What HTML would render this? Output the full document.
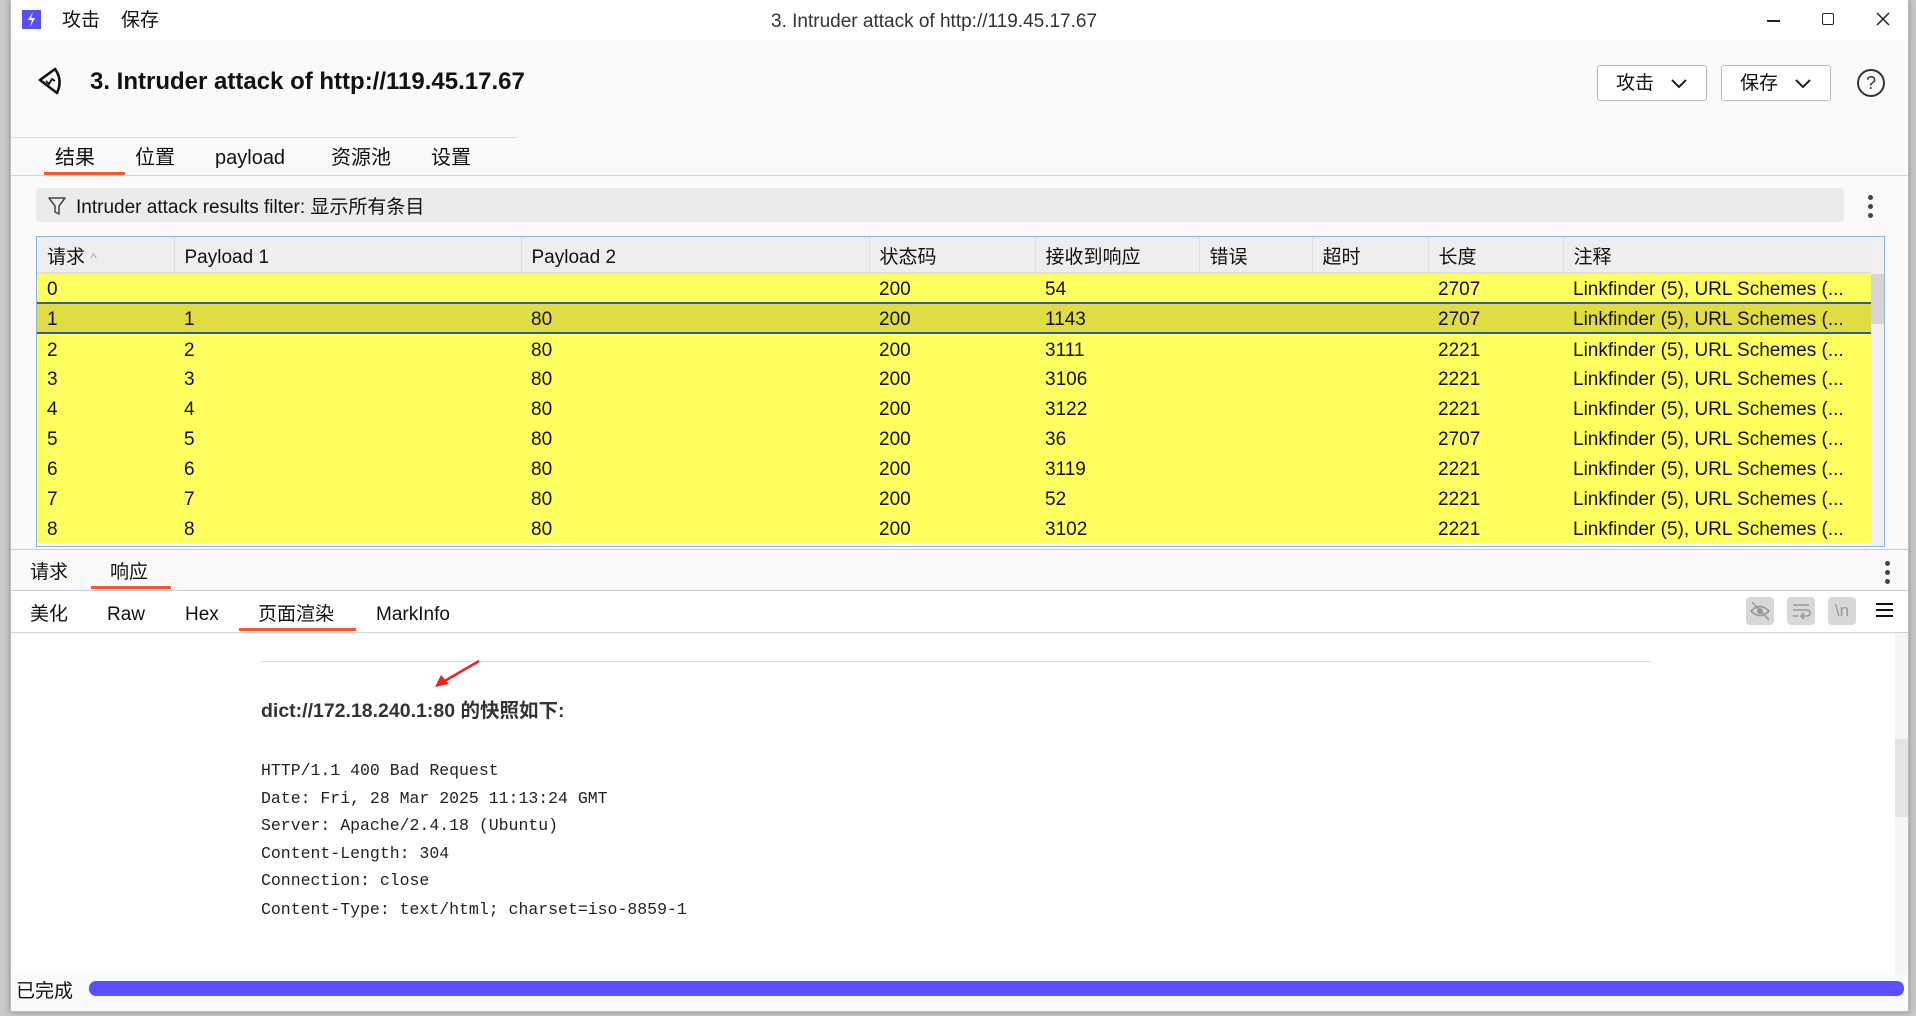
<!DOCTYPE html>
<html><head><meta charset="utf-8"><style>
*{margin:0;padding:0;box-sizing:border-box}
body{width:1916px;height:1016px;background:#c9c9c9;position:relative;overflow:hidden;font-family:"Liberation Sans","Noto Sans CJK SC",sans-serif;color:#111;line-height:1.25}
.win{position:absolute;left:10px;top:0;width:1899px;height:1012px;background:#fafafa;border:1px solid #bbb;border-top:none;box-shadow:0 0 6px rgba(0,0,0,.3)}
.a{position:absolute;white-space:nowrap}
.tb{position:absolute;left:0;top:0;width:100%;height:40px;background:#fff}
.btn{position:absolute;top:65px;height:36px;border:1px solid #b8b8b8;border-radius:3px;background:#fff;font-size:19px;line-height:36px;padding-left:18px}
table{border-collapse:collapse;table-layout:fixed}
td,th{font-weight:normal;text-align:left;padding-left:10px;font-size:19px;white-space:nowrap;overflow:hidden;line-height:24px}
th{height:36px;background:#eee;border-right:1px solid #ddd;border-bottom:2px solid #ddd;padding-top:6px}
td{height:30px;padding-top:4px}
tr.y td{background:#ffff60}
tr.s td{background:#e0dd44;border-top:2px solid #2a5f9a;border-bottom:2px solid #2a5f9a}
.mono{font-family:"Liberation Mono",monospace;font-size:16.5px;color:#222}
.ib{position:absolute;top:597px;width:28px;height:28px;border-radius:4px;background:#d8d8d8}
</style></head><body>
<div class="win">
<div class="tb">
<div class="a" style="left:11px;top:10px;width:19px;height:19px;background:#5a50f0"></div>
<svg class="a" style="left:15px;top:12px" width="11" height="15" viewBox="0 0 11 15"><path d="M7 0 L2 8 H6 L4 15 L9 6 H5 Z" fill="#fff"/></svg>
<div class="a" style="left:51px;top:9px;font-size:19px">攻击</div>
<div class="a" style="left:110px;top:9px;font-size:19px">保存</div>
<div class="a" style="left:760px;top:10px;font-size:19px;color:#333">3. Intruder attack of http://119.45.17.67</div>
<div class="a" style="left:1756px;top:20px;width:13px;height:1.5px;background:#222"></div>
<div class="a" style="left:1811px;top:13px;width:12px;height:12px;border:1.5px solid #222;border-radius:2px"></div>
<svg class="a" style="left:1865px;top:12px" width="14" height="14"><path d="M1 1L13 13M13 1L1 13" stroke="#222" stroke-width="1.5"/></svg>
</div>
<svg class="a" style="left:26px;top:66px" width="28" height="30" viewBox="0 0 28 30"><path d="M3 14 L18 3 Q26 14 20 27 Z" fill="none" stroke="#111" stroke-width="2.6" stroke-linejoin="round"/><path d="M9 15 L12 18 L15 13 L18 15" fill="none" stroke="#111" stroke-width="1.8"/></svg>
<div class="a" style="left:79px;top:67px;font-size:24px;font-weight:bold">3. Intruder attack of http://119.45.17.67</div>
<div class="btn" style="left:1586px;width:110px">攻击<svg class="a" style="left:72px;top:12px" width="18" height="12"><path d="M2 2L9 9L16 2" fill="none" stroke="#222" stroke-width="2"/></svg></div>
<div class="btn" style="left:1710px;width:110px">保存<svg class="a" style="left:72px;top:12px" width="18" height="12"><path d="M2 2L9 9L16 2" fill="none" stroke="#222" stroke-width="2"/></svg></div>
<div class="a" style="left:1846px;top:69px;width:28px;height:28px;border:2px solid #333;border-radius:50%;text-align:center;font-size:18px;line-height:24px;color:#333">?</div>
<div class="a" style="left:0;top:137px;width:506px;height:1px;background:#cfe0ee"></div>
<div class="a" style="left:0;top:175px;width:100%;height:1px;background:#d4d4d4"></div>
<div class="a" style="left:44px;top:146px;font-size:20px">结果</div>
<div class="a" style="left:124px;top:146px;font-size:20px">位置</div>
<div class="a" style="left:204px;top:146px;font-size:20px">payload</div>
<div class="a" style="left:320px;top:146px;font-size:20px">资源池</div>
<div class="a" style="left:420px;top:146px;font-size:20px">设置</div>
<div class="a" style="left:33px;top:172px;width:81px;height:3px;background:#f25a2c"></div>
<div class="a" style="left:25px;top:188px;width:1808px;height:34px;background:#ebebeb;border-radius:4px"></div>
<svg class="a" style="left:36px;top:196px" width="20" height="20"><path d="M2 2H18L12 10V18L8 16V10Z" fill="none" stroke="#444" stroke-width="1.5" stroke-linejoin="round"/></svg>
<div class="a" style="left:65px;top:196px;font-size:19px">Intruder attack results filter: 显示所有条目</div>
<div class="a" style="left:1857px;top:195px;width:5px;height:5px;border-radius:50%;background:#444;box-shadow:0 9px 0 #444,0 18px 0 #444"></div>
<div class="a" style="left:25px;top:236px;width:1849px;height:311px;border:1px solid #8ab4e0;background:#fff;overflow:hidden">
<table style="width:1834px">
<colgroup><col style="width:137px"><col style="width:347px"><col style="width:348px"><col style="width:166px"><col style="width:164px"><col style="width:113px"><col style="width:116px"><col style="width:135px"><col style="width:308px"></colgroup>
<tr><th>请求 <span style="color:#aaa;font-size:14px">^</span></th><th>Payload 1</th><th>Payload 2</th><th>状态码</th><th>接收到响应</th><th>错误</th><th>超时</th><th>长度</th><th>注释</th></tr>
<tr class="y"><td>0</td><td></td><td></td><td>200</td><td>54</td><td></td><td></td><td>2707</td><td>Linkfinder (5), URL Schemes (...</td></tr>
<tr class="s"><td>1</td><td>1</td><td>80</td><td>200</td><td>1143</td><td></td><td></td><td>2707</td><td>Linkfinder (5), URL Schemes (...</td></tr>
<tr class="y"><td>2</td><td>2</td><td>80</td><td>200</td><td>3111</td><td></td><td></td><td>2221</td><td>Linkfinder (5), URL Schemes (...</td></tr>
<tr class="y"><td>3</td><td>3</td><td>80</td><td>200</td><td>3106</td><td></td><td></td><td>2221</td><td>Linkfinder (5), URL Schemes (...</td></tr>
<tr class="y"><td>4</td><td>4</td><td>80</td><td>200</td><td>3122</td><td></td><td></td><td>2221</td><td>Linkfinder (5), URL Schemes (...</td></tr>
<tr class="y"><td>5</td><td>5</td><td>80</td><td>200</td><td>36</td><td></td><td></td><td>2707</td><td>Linkfinder (5), URL Schemes (...</td></tr>
<tr class="y"><td>6</td><td>6</td><td>80</td><td>200</td><td>3119</td><td></td><td></td><td>2221</td><td>Linkfinder (5), URL Schemes (...</td></tr>
<tr class="y"><td>7</td><td>7</td><td>80</td><td>200</td><td>52</td><td></td><td></td><td>2221</td><td>Linkfinder (5), URL Schemes (...</td></tr>
<tr class="y"><td>8</td><td>8</td><td>80</td><td>200</td><td>3102</td><td></td><td></td><td>2221</td><td>Linkfinder (5), URL Schemes (...</td></tr>
</table>
<div class="a" style="left:1834px;top:0;width:13px;height:309px;background:#f0f0f0"><div style="margin-top:37px;height:50px;background:#d6d6d6"></div></div>
</div>
<div class="a" style="left:0;top:549px;width:100%;height:1px;background:#ccc"></div>
<div class="a" style="left:19px;top:561px;font-size:19px">请求</div>
<div class="a" style="left:99px;top:561px;font-size:19px">响应</div>
<div class="a" style="left:80px;top:586px;width:80px;height:3px;background:#f25a2c"></div>
<div class="a" style="left:1874px;top:561px;width:5px;height:5px;border-radius:50%;background:#444;box-shadow:0 9px 0 #444,0 18px 0 #444"></div>
<div class="a" style="left:0;top:590px;width:100%;height:43px;background:#fff;border-top:1px solid #ccd;border-bottom:1px solid #d4d4d4"></div>
<div class="a" style="left:19px;top:603px;font-size:19px">美化</div>
<div class="a" style="left:96px;top:603px;font-size:19px">Raw</div>
<div class="a" style="left:174px;top:603px;font-size:19px">Hex</div>
<div class="a" style="left:247px;top:603px;font-size:19px">页面渲染</div>
<div class="a" style="left:365px;top:603px;font-size:19px">MarkInfo</div>
<div class="a" style="left:228px;top:628px;width:117px;height:3px;background:#f25a2c"></div>
<div class="ib" style="left:1735px"><svg width="28" height="28"><path d="M5 14Q14 5 23 14Q14 23 5 14Z" fill="none" stroke="#999" stroke-width="1.6"/><circle cx="14" cy="14" r="3" fill="#999"/><path d="M6 5L23 23" stroke="#999" stroke-width="1.6"/></svg></div>
<div class="ib" style="left:1776px"><svg width="28" height="28"><path d="M6 8H22M6 13H20Q23 13 23 16Q23 19 20 19H15M17 16L14 19L17 22M6 19H11" fill="none" stroke="#999" stroke-width="1.6"/></svg></div>
<div class="ib" style="left:1817px;color:#999;font-size:17px;text-align:center;line-height:28px">\n</div>
<div class="a" style="left:1865px;top:603px;width:17px;height:2px;background:#111;box-shadow:0 6px 0 #111,0 12px 0 #111"></div>
<div class="a" style="left:0;top:633px;width:1884px;height:342px;background:#fff"></div>
<div class="a" style="left:1884px;top:633px;width:13px;height:342px;background:#f5f5f5"><div style="margin-top:106px;height:78px;background:#e4e4e4"></div></div>
<div class="a" style="left:250px;top:661px;width:1390px;height:1px;background:#ddd"></div>
<svg class="a" style="left:410px;top:658px" width="62" height="32"><path d="M58 3L22 24" stroke="#e8281e" stroke-width="2.5"/><path d="M14 29L20 17L28 26Z" fill="#e8281e"/></svg>
<div class="a" style="left:250px;top:699px;font-size:19.5px;font-weight:bold;color:#333">dict://172.18.240.1:80 的快照如下:</div>
<div class="a mono" style="left:250px;top:761px">HTTP/1.1 400 Bad Request</div>
<div class="a mono" style="left:250px;top:789px">Date: Fri, 28 Mar 2025 11:13:24 GMT</div>
<div class="a mono" style="left:250px;top:816px">Server: Apache/2.4.18 (Ubuntu)</div>
<div class="a mono" style="left:250px;top:844px">Content-Length: 304</div>
<div class="a mono" style="left:250px;top:871px">Connection: close</div>
<div class="a mono" style="left:250px;top:900px">Content-Type: text/html; charset=iso-8859-1</div>
<div class="a" style="left:5px;top:980px;font-size:19px">已完成</div>
<div class="a" style="left:78px;top:981px;width:1815px;height:15px;background:#5b4ffe;border-radius:7px"></div>
</div>
</body></html>
